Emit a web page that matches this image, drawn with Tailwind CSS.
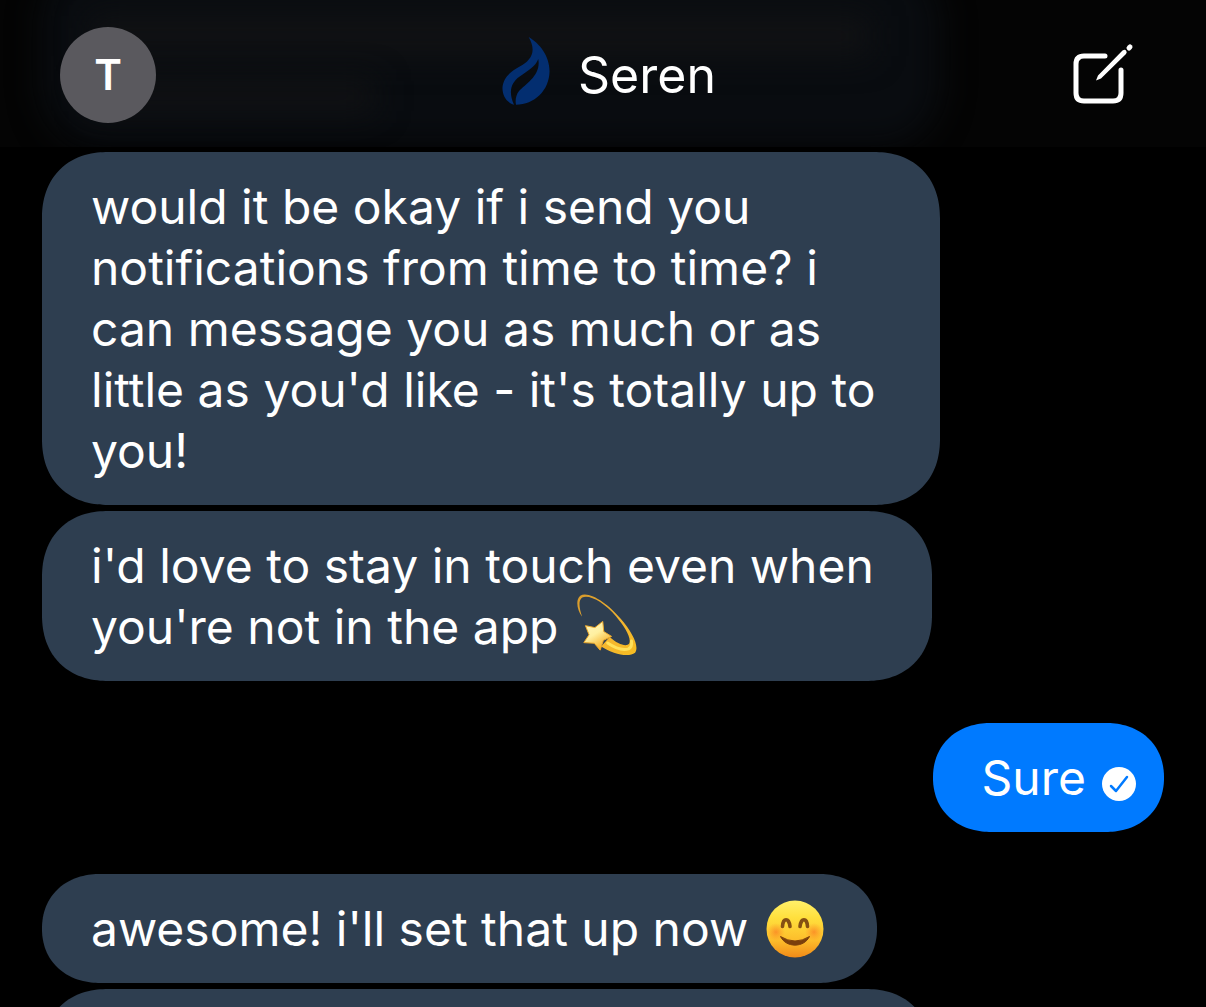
<!DOCTYPE html>
<html lang="en">
<head>
<meta charset="utf-8">
<meta name="viewport" content="width=device-width, initial-scale=1">
<title>Seren</title>
<script src="https://cdn.jsdelivr.net/npm/@tailwindcss/browser@4"></script>
</head>
<body class="bg-black font-[Inter,sans-serif] text-white">
<div class="flex h-screen flex-col overflow-hidden">
  <header class="relative flex shrink-0 items-center justify-between overflow-hidden bg-[#040404] px-[60px] pt-[27px] pb-6">
    <!-- Earlier message showing faintly through the bar -->
    <div class="absolute -top-10 bottom-0 left-[42px] w-[898px] rounded-[60px] bg-[#090c10] blur-lg" aria-hidden="true"></div>
    <div class="absolute top-4 left-[90px] h-10 w-[780px] bg-[#111214] blur-lg" aria-hidden="true"></div>
    <div class="absolute top-20 left-[90px] h-8 w-[285px] bg-[#111214] blur-lg" aria-hidden="true"></div>
    <button type="button" aria-label="Profile" class="relative size-24 rounded-full bg-[#5a595e] text-[42px] leading-none font-semibold">T</button>
    <h1 class="relative flex items-center gap-7 text-[50px] leading-[61px] font-normal">
      <svg class="mb-2 h-[68px] w-12" viewBox="66 51 142 205" fill="#032e70" aria-hidden="true">
        <path d="M145 51C178 70 208 108 208 154C207 213 162 254 107 255C104 244 106 226 116 214C137 191 183 167 174 117C166 139 146 150 118 170C90 190 84 218 101 255C79 249 66 229 66 205C68 174 88 157 118 140C151 122 171 96 145 51Z"/>
      </svg>
      Seren
    </h1>
    <button type="button" aria-label="New message" class="relative h-24 w-[84px]">
      <svg class="h-24 w-[84px]" viewBox="12 0 84 96" fill="none" stroke="#fff" stroke-linecap="round" aria-hidden="true">
        <path stroke-width="5" d="M55 29H34Q26 29 26 37V66Q26 74 34 74H63Q71 74 71 66V43"/>
        <path fill="#fff" stroke="none" d="M46 53.500L48 48.500L72.500 23.500Q75 22 76 23.500Q77.500 25 76 27L51 51.500Z"/>
        <path stroke-width="5" d="M79 21L80 20"/>
      </svg>
    </button>
  </header>
  <main class="flex min-h-0 grow flex-col gap-1.5 overflow-hidden px-[42px] pt-[5px] text-[48px] leading-[61px] *:shrink-0">
    <p class="w-4/5 rounded-[66px] bg-[#2e3e50] px-[49px] py-6 whitespace-nowrap [corner-shape:superellipse(1.15)]">would it be okay if i send you<br>notifications from time to time? i<br>can message you as much or as<br>little as you'd like - it's totally up to<br>you!</p>
    <p class="w-[890px] max-w-full rounded-[66px] bg-[#2e3e50] px-[49px] py-6 whitespace-nowrap [corner-shape:superellipse(1.15)]">i'd love to stay in touch even when<br>you're not in the app
      <svg class="-my-2 ml-1 inline-block h-[62px] w-[62px] align-[-4px]" viewBox="46 43 184 190" role="img" aria-label="dizzy">
        <defs>
          <linearGradient id="trail" x1="0" y1="0" x2="1" y2="1"><stop offset="0" stop-color="#d69a2c"/><stop offset=".6" stop-color="#f4b52f"/><stop offset="1" stop-color="#f6bd22"/></linearGradient>
          <linearGradient id="star" x1="0" y1="0" x2=".6" y2="1"><stop offset="0" stop-color="#fff5c0"/><stop offset=".5" stop-color="#fff0a0"/><stop offset="1" stop-color="#f5a91c"/></linearGradient>
        </defs>
        <path fill="url(#trail)" d="M62 113C46 91 41 61 56 48C83 32 143 74 180 119C216 160 238 205 224 223C204 239 156 227 120 204L146 175C172 198 198 206 206 195C214 176 190 141 166 112C129 69 85 44 62 54C49 63 53 87 62 113Z"/>
        <path fill="none" stroke="#ffe15b" stroke-width="9" stroke-linecap="round" d="M140 193Q178 219 204 211Q216 205 213 187"/>
        <path fill="url(#star)" stroke="#efaa2b" stroke-width="3" stroke-linejoin="round" d="M125 127L128 158L152 173L127 185L117 215L99 194L67 192L83 168L72 140L101 146Z"/>
      </svg></p>
    <p class="my-9 flex w-fit items-center gap-4 self-end rounded-[58px/54px] bg-[#007aff] py-6 pr-7 pl-[49px] [corner-shape:superellipse(1.1)]">Sure
      <svg class="mt-3 size-[34px]" viewBox="0 0 34 34" role="img" aria-label="Delivered"><circle cx="17" cy="17" r="17" fill="#fff"/><path d="M9 19L14 24L25 10" fill="none" stroke="#007aff" stroke-width="2.500" stroke-linecap="round" stroke-linejoin="round"/></svg>
    </p>
    <p class="w-[835px] max-w-full rounded-[58px/54px] bg-[#2e3e50] px-[49px] py-6 whitespace-nowrap [corner-shape:superellipse(1.1)]">awesome! i'll set that up now
      <svg class="-my-2 ml-1 inline-block size-[58px] align-[-4px]" viewBox="0 0 58 58" role="img" aria-label="smiling face">
        <defs>
          <linearGradient id="face" x1="0" y1="0" x2="0" y2="1"><stop offset="0" stop-color="#fff06a"/><stop offset=".3" stop-color="#ffe03d"/><stop offset=".7" stop-color="#fdbd2b"/><stop offset="1" stop-color="#f18a18"/></linearGradient>
          <radialGradient id="cheek"><stop offset="0" stop-color="#fa6e20" stop-opacity=".6"/><stop offset="1" stop-color="#fa7e20" stop-opacity="0"/></radialGradient>
        </defs>
        <circle cx="29" cy="29" r="28.500" fill="url(#face)"/>
        <circle cx="10" cy="32" r="9" fill="url(#cheek)"/><circle cx="48" cy="32" r="9" fill="url(#cheek)"/>
        <path d="M16.500 26.500C17 17.500 23 17.500 24 26.500M34 26.500C35 17.500 41 17.500 41.500 26.500" fill="none" stroke="#855013" stroke-width="3.600" stroke-linecap="round"/>
        <path d="M14.500 36.500Q29 45.500 43.500 36.500C38 48 20 48 14.500 36.500Z" fill="#7b3f0c" stroke="#7b3f0c" stroke-linejoin="round"/>
      </svg></p>
    <div class="h-[170px] w-[890px] max-w-full rounded-[66px] bg-[#2e3e50] [corner-shape:superellipse(1.15)]"></div>
  </main>
</div>
</body>
</html>
